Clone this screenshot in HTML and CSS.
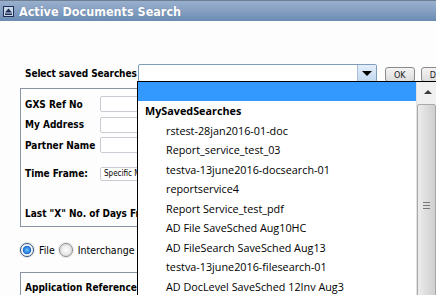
FILE: index.html
```html
<!DOCTYPE html>
<html lang="en">
<head>
    <meta charset="UTF-8">
    <title>Active Documents Search</title>
    <link rel="stylesheet" href="styles.css">
</head>
<body>
    <div class="titlebar">
        <span class="collapse-icon">
            <svg width="11" height="11" viewBox="0 0 11 11">
                <rect x="0.5" y="0.5" width="10" height="10" fill="#c9d6e8" stroke="#1c2e55"/>
                <path d="M2 6.5 L5.5 2.5 L9 6.5 Z" fill="#1c2e55"/>
                <rect x="2" y="7.5" width="7" height="1.5" fill="#1c2e55"/>
            </svg>
        </span>
        <span class="title">Active Documents Search</span>
    </div>

    <div class="content">
        <div class="saved-row">
            <label class="saved-label">Select saved Searches</label>
            <div class="combo">
                <div class="combo-value"></div>
                <div class="combo-arrow"><span></span></div>
            </div>
            <button class="btn">OK</button>
            <button class="btn">Delete</button>
        </div>

        <div class="criteria">
            <div class="field"><label>GXS Ref No</label><input type="text"></div>
            <div class="field"><label>My Address</label><input type="text"></div>
            <div class="field"><label>Partner Name</label><input type="text"></div>
            <div class="field time-frame"><label>Time Frame:</label><div class="small-select">Specific Month</div></div>
            <div class="field last-days"><label>Last "X" No. of Days From Today</label></div>
        </div>

        <div class="radios">
            <span class="radio checked"></span><span class="radio-text">File</span>
            <span class="radio"></span><span class="radio-text">Interchange</span>
        </div>

        <div class="criteria second">
            <div class="field"><label>Application Reference</label></div>
        </div>

        <div class="dropdown">
            <div class="dropdown-list">
                <div class="opt selected"></div>
                <div class="opt group">MySavedSearches</div>
                <div class="opt">rstest-28jan2016-01-doc</div>
                <div class="opt">Report_service_test_03</div>
                <div class="opt">testva-13june2016-docsearch-01</div>
                <div class="opt">reportservice4</div>
                <div class="opt">Report Service_test_pdf</div>
                <div class="opt">AD File SaveSched Aug10HC</div>
                <div class="opt">AD FileSearch SaveSched Aug13</div>
                <div class="opt">testva-13june2016-filesearch-01</div>
                <div class="opt">AD DocLevel SaveSched 12Inv Aug3</div>
            </div>
            <div class="scrollbar">
                <div class="scroll-up"><span></span></div>
                <div class="thumb"><span class="grip"></span></div>
            </div>
        </div>
    </div>
</body>
</html>
```

FILE: styles.css
```css
html, body {
    height: 295px;
    overflow: hidden;
}

body {
    margin: 0;
    background-color: #fdfdfd;
    font-family: "DejaVu Sans Condensed", "DejaVu Sans", sans-serif;
    font-size: 10px;
    color: #000;
}

.titlebar {
    height: 20px;
    border-top: 1px solid #6d7d92;
    background: linear-gradient(#98afcd, #8aa3c4 40%, #6a8bb3);
    display: flex;
    align-items: center;
    padding-left: 3px;
}

.collapse-icon {
    display: flex;
    margin-right: 5px;
}

.title {
    color: #fff;
    font-weight: bold;
    font-size: 12.5px;
    text-shadow: 0 0 1px #5a7395;
}

.content {
    position: relative;
    padding: 43px 0 0 20px;
}

.saved-row {
    display: flex;
    align-items: center;
    height: 18px;
}

.saved-label {
    flex-shrink: 0;
    font-weight: bold;
    margin-left: 5px;
    width: 113px;
    white-space: nowrap;
    letter-spacing: -0.1px;
}

.combo {
    flex-shrink: 0;
    display: flex;
    width: 237px;
    height: 16px;
    border: 1px solid #7f9db9;
    border-radius: 2px;
    background: #fff;
}

.combo-value {
    flex: 1;
}

.combo-arrow {
    width: 18px;
    background: linear-gradient(#e3eefa, #c3d8ef);
    border-left: 1px solid #a8c0dc;
    display: flex;
    align-items: center;
    justify-content: center;
}

.combo-arrow span {
    width: 0;
    height: 0;
    border-left: 5px solid transparent;
    border-right: 5px solid transparent;
    border-top: 5px solid #000;
}

.btn {
    flex-shrink: 0;
    height: 15px;
    margin: 3px 0 0 8px;
    padding: 0 8px;
    font-family: inherit;
    font-size: 9px;
    color: #222;
    background: linear-gradient(#f4f4f4, #dcdcdc);
    border: 1px solid #8a8a8a;
    border-radius: 3px;
}

.btn + .btn {
    margin-left: 6px;
}

.criteria {
    margin-top: 6px;
    width: 400px;
    height: 139px;
    border: 1px solid #8896a4;
    padding: 5px 0 0 4px;
    box-sizing: border-box;
}

.field {
    display: flex;
    align-items: center;
    height: 20.5px;
}

.field label {
    font-weight: bold;
    width: 75px;
    flex-shrink: 0;
    white-space: nowrap;
}

.field input {
    width: 60px;
    height: 14px;
    border: 1px solid #c8cdd3;
    border-radius: 2px;
    padding: 0;
    margin: 0;
}

.time-frame {
    margin-top: 8px;
}

.small-select {
    width: 60px;
    height: 12px;
    border: 1px solid #c8cdd3;
    border-radius: 2px;
    font-size: 8px;
    line-height: 12px;
    padding-left: 3px;
    white-space: nowrap;
    overflow: hidden;
}

.last-days {
    margin-top: 19px;
}

.radios {
    display: flex;
    align-items: center;
    height: 20px;
    margin-top: 13px;
}

.radio {
    width: 12px;
    height: 12px;
    border-radius: 50%;
    border: 1px solid #8d8d8d;
    background: radial-gradient(#ffffff, #d4d4d4);
    box-shadow: 0 0 0 1px #e6e6e6;
}

.radio.checked {
    background: radial-gradient(#6fc4ff 0, #1e6fd0 45%, #ffffff 55%, #e4e4e4);
    border-color: #2c4f7a;
}

.radio-text {
    margin: 0 4px 0 5px;
    font-size: 10.5px;
}

.second {
    margin-top: 12px;
    height: 40px;
    padding-top: 4px;
}

.second .field label {
    width: auto;
}

.dropdown {
    position: absolute;
    left: 137px;
    top: 60px;
    width: 300px;
    height: 220px;
    border: 1px solid #000;
    background: #fff;
    display: flex;
    font-family: "Open Sans", sans-serif;
    font-size: 10.8px;
}

.dropdown-list {
    flex: 1;
}

.opt {
    height: 19.5px;
    line-height: 19.5px;
    padding-left: 28px;
    white-space: nowrap;
}

.opt.selected {
    background: #3399ff;
    height: 19px;
}

.opt.group {
    font-weight: bold;
    padding-left: 7px;
}

.scrollbar {
    width: 21px;
    background: #f0f0f0;
    border-left: 1px solid #e2e2e2;
}

.scroll-up {
    height: 20px;
    display: flex;
    align-items: center;
    justify-content: center;
}

.scroll-up span {
    width: 0;
    height: 0;
    border-left: 4px solid transparent;
    border-right: 4px solid transparent;
    border-bottom: 4px solid #3c3c3c;
}

.thumb {
    margin: 2px 2px 0 0;
    height: 200px;
    border: 1px solid #a9a9a9;
    border-radius: 2px;
    background: linear-gradient(90deg, #ececec, #dadada 60%, #cfcfcf);
    display: flex;
    align-items: center;
    justify-content: center;
}

.grip {
    width: 7px;
    height: 5px;
    border-top: 1px solid #777;
    border-bottom: 1px solid #777;
    position: relative;
}

.grip::after {
    content: "";
    position: absolute;
    left: 0;
    right: 0;
    top: 2px;
    border-top: 1px solid #777;
}
```
